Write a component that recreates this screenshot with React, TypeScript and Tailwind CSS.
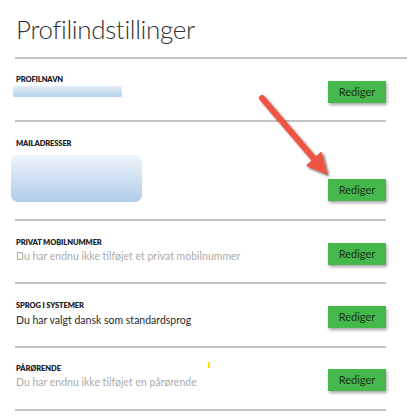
import React from 'react';

const font = { fontFamily: 'Lato, "Open Sans", sans-serif' };

const EditButton: React.FC<{ className?: string }> = ({ className = '' }) => (
  <button
    className={`w-[58px] h-[22px] bg-[#45b84c] text-[#173317] text-[11px] shadow-[1px_2px_3px_rgba(0,0,0,0.35)] ${className}`}
  >
    Rediger
  </button>
);

const Label: React.FC<{ children: React.ReactNode }> = ({ children }) => (
  <div className="text-[7.5px] leading-[9px] font-extrabold text-[#222] uppercase tracking-[-0.1px]">{children}</div>
);

const Arrow: React.FC = () => (
  <svg className="absolute left-0 top-0 pointer-events-none" width="407" height="419" viewBox="0 0 407 419">
    <defs>
      <filter id="sh" x="-20%" y="-20%" width="140%" height="140%">
        <feDropShadow dx="2" dy="2" stdDeviation="1.2" floodColor="#000" floodOpacity="0.55" />
      </filter>
    </defs>
    <g filter="url(#sh)" fill="#ef5544" stroke="#ef5544">
      <line x1="262" y1="98" x2="315" y2="160" strokeWidth="6" strokeLinecap="round" />
      <polygon points="326,173 321,153 307.5,165.5" strokeWidth="2" strokeLinejoin="round" />
    </g>
  </svg>
);

export default function App() {
  return (
    <div className="relative w-[407px] h-[419px] bg-white overflow-hidden" style={font}>
      <div className="ml-[15px] h-[59px] border-b-2 border-[#c4c4c4] pl-[1px] pt-[11px]">
        <h1 className="text-[26px] leading-[36px] font-light text-[#333] tracking-[-0.35px]">Profilindstillinger</h1>
      </div>

      <div className="ml-[15px] w-[371px]">
        {/* Profilnavn */}
        <div className="h-[63px] flex justify-between border-b-2 border-[#c4c4c4]">
          <div className="pl-[1px] pt-[16px]">
            <Label>Profilnavn</Label>
            <div className="-ml-[3px] mt-[2px] w-[109px] h-[11px] rounded-[2px] bg-gradient-to-b from-[#e4eef9] to-[#b5d1ec]" />
          </div>
          <EditButton className="mt-[22px]" />
        </div>

        {/* Mailadresser */}
        <div className="h-[99px] flex justify-between border-b-2 border-[#c4c4c4]">
          <div className="pl-[1px] pt-[17px]">
            <Label>Mailadresser</Label>
            <div className="-ml-[5px] mt-[7px] w-[131px] h-[47px] rounded-[7px] bg-gradient-to-b from-[#f0f5fb] to-[#afcce9]" />
          </div>
          <EditButton className="mt-[57px]" />
        </div>

        {/* Privat mobilnummer */}
        <div className="h-[63px] flex justify-between border-b-2 border-[#c4c4c4]">
          <div className="pl-[1px] pt-[17px]">
            <Label>Privat mobilnummer</Label>
            <div className="mt-[2px] text-[10.5px] leading-[14px] text-[#ababab]">Du har endnu ikke tilføjet et privat mobilnummer</div>
          </div>
          <EditButton className="mt-[22px]" />
        </div>

        {/* Sprog */}
        <div className="h-[64px] flex justify-between border-b-2 border-[#c4c4c4]">
          <div className="pl-[1px] pt-[17px]">
            <Label>Sprog i systemer</Label>
            <div className="mt-[3px] text-[10.5px] leading-[14px] text-[#2a2a2a]">Du har valgt dansk som standardsprog</div>
          </div>
          <EditButton className="mt-[22px]" />
        </div>

        {/* Pårørende */}
        <div className="relative h-[63px] flex justify-between border-b-2 border-[#c4c4c4]">
          <div className="pl-[1px] pt-[16px]">
            <Label>Pårørende</Label>
            <div className="mt-[2px] text-[10.5px] leading-[14px] text-[#ababab]">Du har endnu ikke tilføjet en pårørende</div>
          </div>
          <span className="absolute left-[193px] top-[14px] w-[2px] h-[6px] bg-[#ffe000]" />
          <EditButton className="mt-[21px]" />
        </div>
      </div>

      <Arrow />
    </div>
  );
}
